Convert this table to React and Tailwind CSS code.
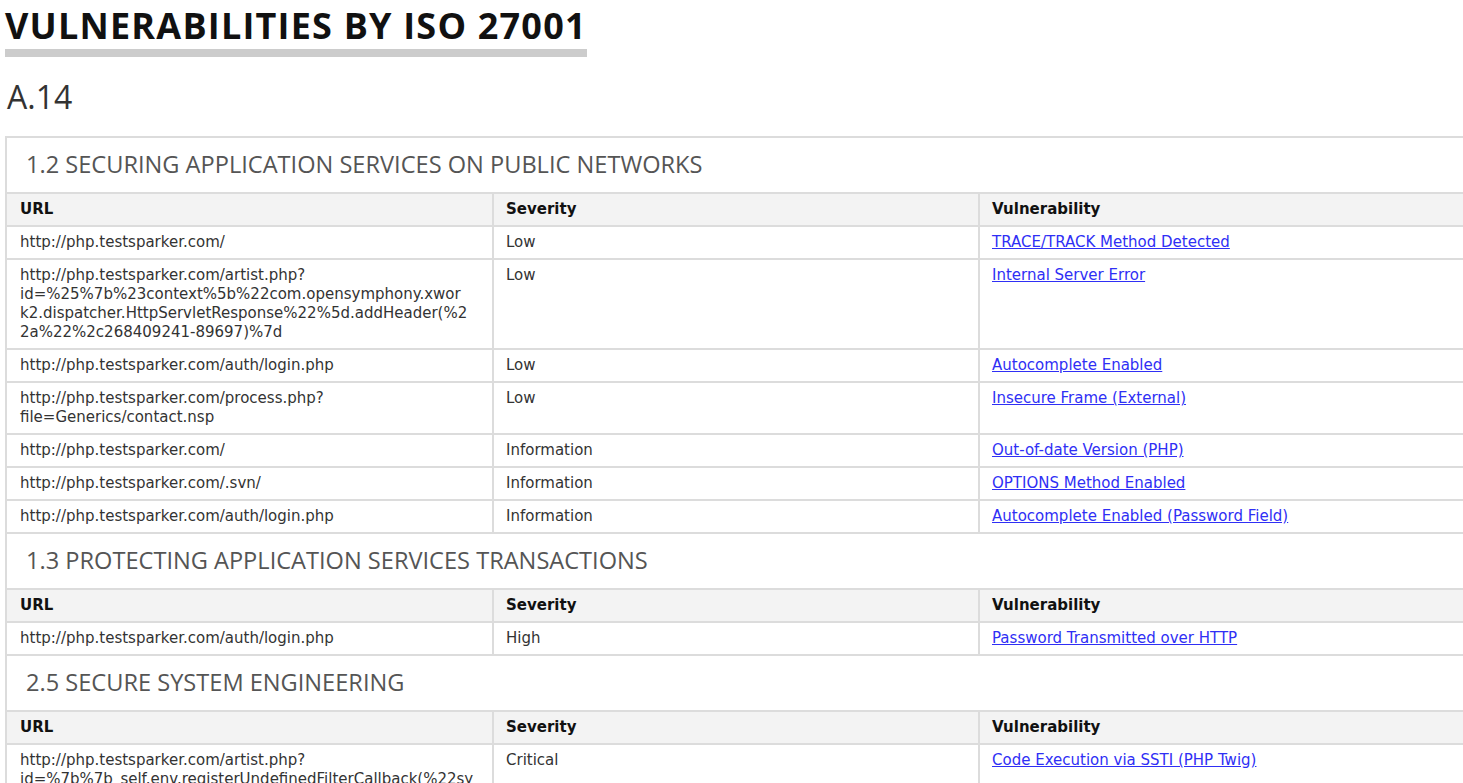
const sections = [
  {
    title: "1.2 SECURING APPLICATION SERVICES ON PUBLIC NETWORKS",
    rows: [
      { url: ["http://php.testsparker.com/"], severity: "Low", vuln: "TRACE/TRACK Method Detected" },
      {
        url: [
          "http://php.testsparker.com/artist.php?",
          "id=%25%7b%23context%5b%22com.opensymphony.xwor",
          "k2.dispatcher.HttpServletResponse%22%5d.addHeader(%2",
          "2a%22%2c268409241-89697)%7d",
        ],
        severity: "Low",
        vuln: "Internal Server Error",
      },
      { url: ["http://php.testsparker.com/auth/login.php"], severity: "Low", vuln: "Autocomplete Enabled" },
      {
        url: ["http://php.testsparker.com/process.php?", "file=Generics/contact.nsp"],
        severity: "Low",
        vuln: "Insecure Frame (External)",
      },
      { url: ["http://php.testsparker.com/"], severity: "Information", vuln: "Out-of-date Version (PHP)" },
      { url: ["http://php.testsparker.com/.svn/"], severity: "Information", vuln: "OPTIONS Method Enabled" },
      {
        url: ["http://php.testsparker.com/auth/login.php"],
        severity: "Information",
        vuln: "Autocomplete Enabled (Password Field)",
      },
    ],
  },
  {
    title: "1.3 PROTECTING APPLICATION SERVICES TRANSACTIONS",
    rows: [
      { url: ["http://php.testsparker.com/auth/login.php"], severity: "High", vuln: "Password Transmitted over HTTP" },
    ],
  },
  {
    title: "2.5 SECURE SYSTEM ENGINEERING",
    rows: [
      {
        url: [
          "http://php.testsparker.com/artist.php?",
          "id=%7b%7b_self.env.registerUndefinedFilterCallback(%22sy",
          "stem%22)%7d%7d%7b%7b_self.env.getFilter(%22SET+/A+",
          "268409241-89697%22)%7d%7d",
        ],
        severity: "Critical",
        vuln: "Code Execution via SSTI (PHP Twig)",
      },
    ],
  },
];

function Section({ section }) {
  return (
    <tbody>
      <tr>
        <td
          colSpan={3}
          className="border-b-2 border-[#dcdcdc] pl-[19px] pt-[10px] pb-[11px] font-['Open_Sans',sans-serif] text-[23.6px] leading-[33px] text-[#555]"
        >
          {section.title}
        </td>
      </tr>
      <tr className="bg-[#f3f3f3] font-bold text-[#111]">
        <td className="border-b-2 border-[#dcdcdc] px-[13px] py-[6px]">URL</td>
        <td className="border-b-2 border-l-2 border-[#dcdcdc] px-[12px] py-[6px]">Severity</td>
        <td className="border-b-2 border-l-2 border-[#dcdcdc] px-[12px] py-[6px]">Vulnerability</td>
      </tr>
      {section.rows.map((row, i) => (
        <tr key={i} className="align-top">
          <td className="border-b-2 border-[#dcdcdc] px-[13px] py-[6px] whitespace-nowrap">
            {row.url.map((line, j) => (
              <div key={j}>{line}</div>
            ))}
          </td>
          <td className="border-b-2 border-l-2 border-[#dcdcdc] px-[12px] py-[6px]">{row.severity}</td>
          <td className="border-b-2 border-l-2 border-[#dcdcdc] px-[12px] py-[6px]">
            <a href="#" className="text-[#2f2ff5] underline">
              {row.vuln}
            </a>
          </td>
        </tr>
      ))}
    </tbody>
  );
}

export default function App() {
  return (
    <div className="w-screen h-screen overflow-hidden bg-white pl-[5px]">
      <h1 className="w-fit border-b-8 border-[#cccccc] pt-[3px] font-['Open_Sans',sans-serif] text-[36px] font-bold leading-[46px] tracking-[1.2px] text-[#111]">
        VULNERABILITIES BY ISO 27001
      </h1>
      <h2 className="ml-[2px] mt-[20px] font-['Open_Sans',sans-serif] text-[32px] leading-[40px] text-[#333]">A.14</h2>
      <table className="mt-[19px] w-[1460px] table-fixed border-separate border-spacing-0 border-l-2 border-t-2 border-[#dcdcdc] font-['DejaVu_Sans',sans-serif] text-[15px] leading-[19px] text-[#333]">
        <colgroup>
          <col className="w-[485px]" />
          <col className="w-[486px]" />
          <col className="w-[487px]" />
        </colgroup>
        {sections.map((s) => (
          <Section key={s.title} section={s} />
        ))}
      </table>
    </div>
  );
}
